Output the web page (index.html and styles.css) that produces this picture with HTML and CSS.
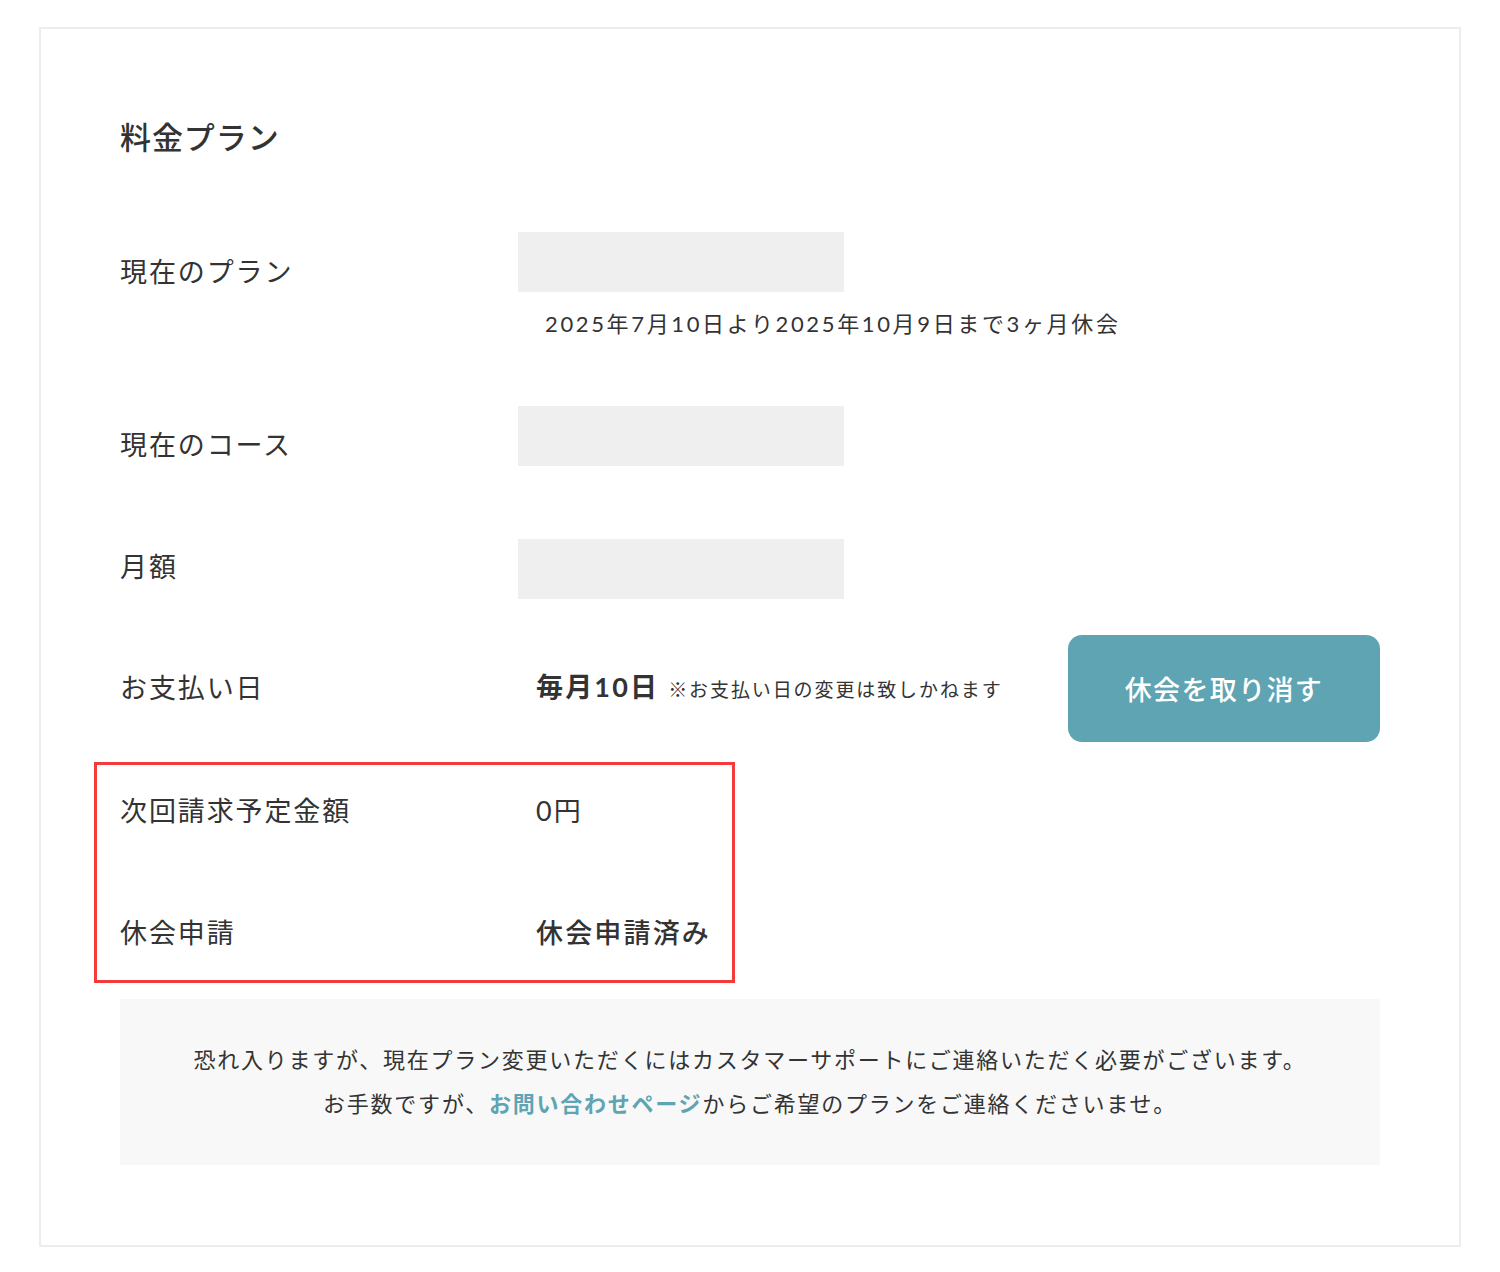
FILE: index.html
```html
<!DOCTYPE html>
<html lang="ja">
<head>
    <meta charset="UTF-8">
    <meta name="viewport" content="width=device-width, initial-scale=1.0">
    <title>料金プラン</title>
    <link rel="stylesheet" href="styles.css">
</head>
<body>
    <div class="card">
        <h2 class="card-title">料金プラン</h2>

        <div class="row row-plan">
            <div class="label">現在のプラン</div>
            <div class="value">
                <div class="placeholder"></div>
                <p class="pause-period">2025年7月10日より2025年10月9日まで3ヶ月休会</p>
            </div>
        </div>

        <div class="row row-course">
            <div class="label">現在のコース</div>
            <div class="value">
                <div class="placeholder"></div>
            </div>
        </div>

        <div class="row row-price">
            <div class="label">月額</div>
            <div class="value">
                <div class="placeholder"></div>
            </div>
        </div>

        <div class="row row-payday">
            <div class="label">お支払い日</div>
            <div class="value value-text">
                <strong class="payday">毎月10日</strong>
                <span class="payday-note">※お支払い日の変更は致しかねます</span>
            </div>
            <button class="cancel-button">休会を取り消す</button>
        </div>

        <div class="highlight">
            <div class="row row-simple">
                <div class="label">次回請求予定金額</div>
                <div class="value value-text">0円</div>
            </div>
            <div class="row row-simple row-pause">
                <div class="label">休会申請</div>
                <div class="value value-text status">休会申請済み</div>
            </div>
        </div>

        <div class="notice">
            <p>恐れ入りますが、現在プラン変更いただくにはカスタマーサポートにご連絡いただく必要がございます。</p>
            <p>お手数ですが、<a href="#" class="notice-link">お問い合わせページ</a>からご希望のプランをご連絡くださいませ。</p>
        </div>
    </div>
</body>
</html>
```

FILE: styles.css
```css
body {
    margin: 0;
    font-family: Lato, "Noto Sans CJK JP", sans-serif;
    color: #333;
    background-color: #fff;
}
.card {
    margin: 27px 39px 26px;
    border: 2px solid #ededed;
    padding: 85px 79px 80px;
}
.card-title {
    margin: 0 0 71px;
    font-size: 31px;
    font-weight: 500;
    line-height: 1.5;
    letter-spacing: 0.03em;
}
.row {
    display: flex;
    align-items: flex-start;
}
.label {
    width: 398px;
    flex-shrink: 0;
    font-size: 27px;
    line-height: 40px;
    letter-spacing: 0.07em;
}
.placeholder {
    width: 326px;
    height: 60px;
    background-color: #efefef;
}
.pause-period {
    margin: 15px 0 0 27px;
    font-size: 22px;
    line-height: 33px;
    letter-spacing: 0.12em;
}
.row-plan .label {
    padding-top: 20px;
}
.row-course {
    margin-top: 66px;
}
.row-course .label {
    padding-top: 19px;
}
.row-price {
    margin-top: 73px;
}
.row-price .label {
    padding-top: 8px;
}
.row-payday {
    margin-top: 36px;
    align-items: center;
}
.value-text {
    padding-left: 18px;
    font-size: 27px;
    line-height: 40px;
    letter-spacing: 0.08em;
}
.payday {
    font-weight: 700;
    letter-spacing: 0.08em;
}
.payday-note {
    margin-left: 0;
    font-size: 19px;
    letter-spacing: 0.1em;
}
.cancel-button {
    margin-left: auto;
    width: 312px;
    height: 107px;
    border: none;
    border-radius: 14px;
    background-color: #5fa4b3;
    color: #fff;
    font-family: Lato, "Noto Sans CJK JP", sans-serif;
    font-size: 27px;
    font-weight: 500;
    letter-spacing: 0.05em;
    cursor: pointer;
}
.highlight {
    position: relative;
    margin-top: 23px;
    padding: 26px 0 27px;
}
.highlight::after {
    content: "";
    position: absolute;
    top: -3px;
    bottom: -3px;
    left: -26px;
    width: 635px;
    border: 3px solid #f43b3b;
    pointer-events: none;
}
.row-pause {
    margin-top: 82px;
}
.status {
    font-weight: 500;
}
.notice {
    margin-top: 19px;
    padding: 39px 20px;
    background-color: #f8f8f8;
    text-align: center;
    font-size: 22px;
    line-height: 44px;
    letter-spacing: 0.08em;
}
.notice p {
    margin: 0;
}
.notice-link {
    color: #5fa4b3;
    font-weight: 700;
    text-decoration: none;
}
```
